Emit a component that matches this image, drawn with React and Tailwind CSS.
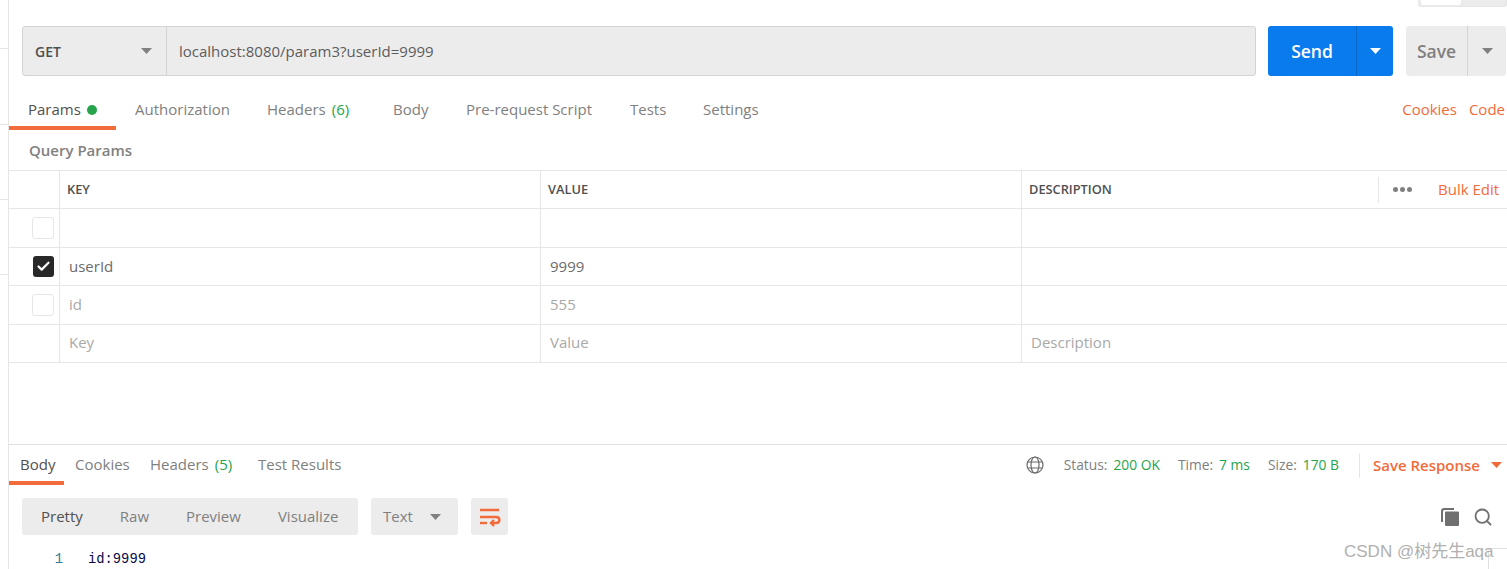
import { Check, Search } from "lucide-react"

const caret = (cls) => (
  <svg className={cls} width="11" height="6" viewBox="0 0 11 6">
    <path d="M0 0h11L5.5 6z" fill="currentColor" />
  </svg>
)

const rows = [
  { key: "", value: "", box: "empty" },
  { key: "userId", value: "9999", box: "checked" },
  { key: "id", value: "555", box: "empty", dim: true },
  { key: "Key", value: "Value", desc: "Description", dim: true },
]

function Tab({ children, width, active, pad = "pl-[19px]" }) {
  return (
    <div className={`h-full shrink-0 flex items-center border-b-4 ${pad} ${active ? "border-[#f26b3a] text-[#505050]" : "border-transparent text-[#808080]"} ${width}`}>
      {children}
    </div>
  )
}

function ParamRow({ row, height }) {
  const textPad = row.box === "checked" ? "pb-0" : "pb-[2px]"
  return (
    <div className={`flex border-b border-[#e6e6e6] ${height}`}>
      <div className={`w-[51px] shrink-0 border-r border-[#e6e6e6] flex items-center ${row.box === "checked" ? "pl-[24px]" : "pl-[23px]"}`}>
        {row.box === "checked" && (
          <div className="w-[21px] h-[21px] rounded-[3px] bg-[#282828] flex items-center justify-center text-white">
            <Check size={15} strokeWidth={3.5} />
          </div>
        )}
        {row.box === "empty" && <div className="w-[22px] h-[22px] rounded-[3px] border border-[#e6e6e6]" />}
      </div>
      <div className={`w-[481px] shrink-0 border-r border-[#e6e6e6] pl-[9px] flex items-center ${textPad} ${row.dim ? "text-[#a9a9a9]" : "text-[#6b6b6b]"}`}>{row.key}</div>
      <div className={`w-[481px] shrink-0 border-r border-[#e6e6e6] pl-[9px] flex items-center ${textPad} ${row.dim ? "text-[#a9a9a9]" : "text-[#6b6b6b]"}`}>{row.value}</div>
      <div className={`flex-1 pl-[9px] flex items-center text-[#a9a9a9] ${textPad}`}>{row.desc}</div>
    </div>
  )
}

export default function App() {
  return (
    <div className="relative w-[1507px] h-[569px] overflow-hidden bg-white flex text-[15px] font-['Open_Sans',sans-serif]">
      {/* left sidebar edge */}
      <div className="w-[9px] shrink-0 border-r border-[#e6e6e6] pt-[48px] flex flex-col">
        <div className="border-t border-[#e6e6e6] mb-[75px]" />
        <div className="border-t border-[#e6e6e6] mb-[74px]" />
        <div className="border-t border-[#e6e6e6] mb-[74px]" />
        <div className="border-t border-[#e6e6e6]" />
      </div>

      <div className="flex-1 min-w-0 flex flex-col">
        {/* top right toggle */}
        <div className="h-[7px] flex justify-end">
          <div className="w-[89px] h-[7px] bg-[#ececec] border border-t-0 border-[#e6e6e6] rounded-b-[3px] pl-[2px]">
            <div className="w-[40px] h-[5px] bg-white rounded-b-[3px]" />
          </div>
        </div>

        {/* request bar */}
        <div className="mt-[19px] pl-[13px] flex h-[50px]">
          <div className="w-[1234px] flex bg-[#ececec] border border-[#d4d4d4] rounded-[3px]">
            <div className="w-[144px] shrink-0 border-r border-[#d4d4d4] pl-[12px] pr-[14px] flex items-center justify-between">
              <span className="font-semibold text-[14px] text-[#505050]">GET</span>
              {caret("text-[#808080]")}
            </div>
            <div className="pl-[12px] flex items-center text-[#5c5c5c]">localhost:8080/param3?userId=9999</div>
          </div>
          <div className="ml-[12px] w-[125px] flex bg-[#097bed] rounded-[3px] text-white">
            <div className="w-[89px] border-r border-[#0868ca] flex items-center justify-center text-[17.5px] font-semibold">Send</div>
            <div className="flex-1 flex items-center justify-center">{caret("")}</div>
          </div>
          <div className="ml-[13px] w-[100px] flex bg-[#ececec] rounded-[3px] text-[#808080]">
            <div className="w-[62px] border-r border-[#d4d4d4] flex items-center justify-center text-[17.5px] font-semibold">Save</div>
            <div className="flex-1 flex items-center justify-center">{caret("")}</div>
          </div>
        </div>

        {/* request tabs */}
        <div className="mt-[17px] h-[37px] flex items-center pr-[2px]">
          <Tab width="w-[107px]" active>
            Params<span className="ml-[6px] w-[10px] h-[10px] rounded-full bg-[#26a44b]" />
          </Tab>
          <Tab width="w-[132px]">Authorization</Tab>
          <Tab width="w-[126px]">Headers<span className="ml-[6px] text-[#26a44b]">(6)</span></Tab>
          <Tab width="w-[73px]">Body</Tab>
          <Tab width="w-[164px]">Pre-request Script</Tab>
          <Tab width="w-[73px]">Tests</Tab>
          <Tab width="w-[94px]">Settings</Tab>
          <div className="ml-auto flex gap-[12px] text-[#f26b3a] pb-[4px]">
            <span>Cookies</span>
            <span>Code</span>
          </div>
        </div>

        <div className="h-[40px] pl-[20px] flex items-center font-semibold text-[#808080]">Query Params</div>

        {/* params table */}
        <div className="border-t border-[#e6e6e6]">
          <div className="flex h-[38px] border-b border-[#e6e6e6] text-[12.8px] font-semibold text-[#505050]">
            <div className="w-[51px] shrink-0 border-r border-[#e6e6e6]" />
            <div className="w-[481px] shrink-0 border-r border-[#e6e6e6] pl-[7px] flex items-center">KEY</div>
            <div className="w-[481px] shrink-0 border-r border-[#e6e6e6] pl-[7px] flex items-center">VALUE</div>
            <div className="flex-1 pl-[7px] flex items-center">
              <span>DESCRIPTION</span>
              <div className="ml-auto flex items-center h-[26px]">
                <div className="h-full border-l border-[#e6e6e6] w-[47px] flex items-center justify-center gap-[2px]">
                  <i className="w-[5px] h-[5px] rounded-full bg-[#808080]" />
                  <i className="w-[5px] h-[5px] rounded-full bg-[#808080]" />
                  <i className="w-[5px] h-[5px] rounded-full bg-[#808080]" />
                </div>
                <div className="w-[82px] pl-[13px] font-normal text-[15px] text-[#f26b3a]">Bulk Edit</div>
              </div>
            </div>
          </div>
          <ParamRow row={rows[0]} height="h-[39px]" />
          <ParamRow row={rows[1]} height="h-[38px]" />
          <ParamRow row={rows[2]} height="h-[39px]" />
          <ParamRow row={rows[3]} height="h-[38px]" />
        </div>

        {/* response */}
        <div className="mt-[81px] border-t border-[#e0e0e0] h-[41px] flex items-center">
          <Tab width="w-[55px]" pad="pl-[11px] pt-[2px]" active>Body</Tab>
          <Tab width="w-[75px]" pad="pl-[11px] pt-[2px]">Cookies</Tab>
          <Tab width="w-[108px]" pad="pl-[11px] pt-[2px]">Headers<span className="ml-[6px] text-[#26a44b]">(5)</span></Tab>
          <Tab width="w-[109px]" pad="pl-[11px] pt-[2px]">Test Results</Tab>
          <div className="ml-auto flex items-center text-[13.8px] text-[#808080] pr-[5px]">
            <svg width="18" height="18" viewBox="0 0 18 18" fill="none" stroke="#6b6b6b" strokeWidth="1.2" className="mr-[20px]">
              <circle cx="9" cy="9" r="8" />
              <ellipse cx="9" cy="9" rx="4" ry="8" />
              <path d="M1.8 6h14.4M1.8 12h14.4" />
            </svg>
            <span>Status:</span>
            <span className="ml-[6px] text-[#26a44b]">200 OK</span>
            <span className="ml-[18px]">Time:</span>
            <span className="ml-[6px] text-[#26a44b]">7 ms</span>
            <span className="ml-[18px]">Size:</span>
            <span className="ml-[6px] text-[#26a44b]">170 B</span>
            <div className="ml-[20px] h-[25px] border-l border-[#e6e6e6]" />
            <span className="ml-[13px] text-[15px] font-semibold text-[#f26b3a]">Save Response</span>
            {caret("ml-[11px] text-[#f26b3a]")}
          </div>
        </div>

        {/* response toolbar */}
        <div className="mt-[13px] pl-[13px] flex h-[37px] text-[#808080]">
          <div className="w-[336px] bg-[#ececec] rounded-[3px] pl-[19px] flex items-center gap-[37px]">
            <span className="text-[#505050]">Pretty</span>
            <span>Raw</span>
            <span>Preview</span>
            <span>Visualize</span>
          </div>
          <div className="ml-[13px] w-[87px] bg-[#ececec] rounded-[3px] pl-[12px] pr-[17px] flex items-center justify-between">
            <span>Text</span>
            {caret("")}
          </div>
          <div className="ml-[13px] w-[37px] bg-[#ececec] rounded-[3px] flex items-center justify-center">
            <svg width="22" height="20" viewBox="0 0 22 20" fill="none" stroke="#f26b3a" strokeWidth="2.4">
              <path d="M1 3h19M1 10h16c4.500 0 4.500 6 0 6h-5" />
              <path d="M1 16h7" />
              <path d="M15 13l-3 3 3 3" />
            </svg>
          </div>
          <div className="ml-auto pr-[14px] flex items-center gap-[14px] text-[#707070]">
            <svg width="18" height="18" viewBox="0 0 18 18" fill="currentColor">
              <rect x="4" y="3.500" width="14" height="14.500" rx="1" />
              <path d="M3 0h10v2H3.500A1.500 1.500 0 002 3.500V14H0V3a3 3 0 013-3z" />
            </svg>
            <Search size={20} strokeWidth={2.2} />
          </div>
        </div>

        {/* response body */}
        <div className="mt-[16px] flex font-['Liberation_Mono',monospace] text-[13.8px] leading-[18px]">
          <span className="w-[79px] pr-[25px] text-right text-[#2d7f9a]">1</span>
          <span className="text-[#0b0b45]">id:9999</span>
        </div>
      </div>

      {/* watermark and corner of the scroll box */}
      <div className="absolute right-0 bottom-0 w-[19px] h-[21px] border-l border-t border-[#e0e0e0]" />
      <div className="absolute left-[1344px] top-[541px] text-[17px] leading-[22px] text-[#b0b0b0] font-['Liberation_Sans','Noto_Sans_CJK_SC',sans-serif]">CSDN @树先生aqa</div>
    </div>
  )
}
